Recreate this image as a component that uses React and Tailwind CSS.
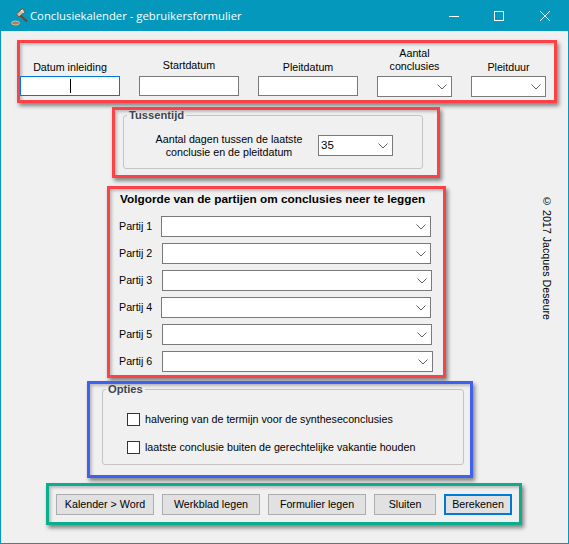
const sans = "font-['Liberation_Sans',Arial,sans-serif]";

function Chevron() {
  return (
    <svg width="10" height="6" viewBox="0 0 10 6" className="shrink-0" fill="none" stroke="#606060" strokeWidth="1">
      <path d="M0.5 0.5 L5 5 L9.5 0.5" />
    </svg>
  );
}

function Combo({ className = "", value = "" }) {
  return (
    <div className={`box-border h-[21px] flex items-center justify-between bg-white border border-[#7a7a7a] pl-[2px] pr-[2px] ${className}`}>
      <span className="text-[11.5px] leading-none text-black">{value}</span>
      <span className="w-[15px] flex justify-center"><Chevron /></span>
    </div>
  );
}

function TextInput({ focused = false, className = "" }) {
  return (
    <div className={`box-border h-[20px] w-[100px] bg-white border flex items-center justify-center ${focused ? "border-[#0078d7]" : "border-[#7a7a7a]"} ${className}`}>
      {focused && <span className="block w-px h-[14px] bg-black" />}
    </div>
  );
}

function Legend({ children }) {
  return (
    <legend className="ml-[3px] px-[2px] text-[11.2px] leading-[12px] font-bold text-[#3c4650]">{children}</legend>
  );
}

const partijen = [
  { n: 1, top: "mt-[10px]", ml: "ml-[0px]", w: "w-[270px]" },
  { n: 2, top: "mt-[6px]", ml: "ml-[1px]", w: "w-[269px]" },
  { n: 3, top: "mt-[6px]", ml: "ml-[1px]", w: "w-[270px]" },
  { n: 4, top: "mt-[6px]", ml: "ml-[0px]", w: "w-[270px]" },
  { n: 5, top: "mt-[6px]", ml: "ml-[1px]", w: "w-[270px]" },
  { n: 6, top: "mt-[6px]", ml: "ml-[1px]", w: "w-[271px]" },
];

const buttons = [
  { t: "Kalender > Word", w: "w-[98px]" },
  { t: "Werkblad legen", w: "w-[98px]" },
  { t: "Formulier legen", w: "w-[98px]" },
  { t: "Sluiten", w: "w-[62px]" },
];

const boxShadow = "shadow-[2px_3px_4px_rgba(0,0,0,0.45),inset_2px_2px_3px_rgba(0,0,0,0.22)]";

export default function App() {
  return (
    <div className={`w-[569px] h-[544px] box-border border-x border-b border-[#0398bc] bg-[#f0f0f0] text-[10.7px] text-black overflow-hidden flex flex-col ${sans}`}>
      {/* Title bar */}
      <div className="h-[31px] shrink-0 -mx-px bg-[#0398bc] flex items-center text-white">
        <svg width="20" height="20" viewBox="0 0 20 20" className="ml-[10px] shrink-0">
          <ellipse cx="5.5" cy="17" rx="4" ry="2" fill="#a9805f" stroke="#e6d8c8" strokeWidth="0.7" />
          <path d="M10.5 9.5 L16.5 15" stroke="#6b4a2d" strokeWidth="2" strokeLinecap="round" />
          <path d="M6.5 8 L12.5 2.5 L15 5.5 L9 11 Z" fill="#d9b8a0" stroke="#5d4030" strokeWidth="0.7" />
          <path d="M11 4 L13.5 6.8" stroke="#fff" strokeWidth="1" />
        </svg>
        <span className="ml-[0px] text-[11.3px] font-['Open_Sans',sans-serif] leading-none">Conclusiekalender - gebruikersformulier</span>
        <div className="ml-auto flex items-center">
          <svg width="10" height="10" viewBox="0 0 10 10" className="mr-[35px]" stroke="#fff" fill="none"><path d="M0 5.5 H10" /></svg>
          <svg width="10" height="10" viewBox="0 0 10 10" className="mr-[36px]" stroke="#fff" fill="none"><rect x="0.5" y="0.5" width="9" height="9" /></svg>
          <svg width="10" height="10" viewBox="0 0 10 10" className="mr-[19px]" stroke="#fff" fill="none"><path d="M0 0 L10 10 M10 0 L0 10" /></svg>
        </div>
      </div>

      {/* Dates */}
      <div className={`box-border mt-[9px] ml-[16px] w-[540px] h-[63px] border-[3px] border-[#fb4246] shrink-0 flex items-start gap-[19px] pl-0 ${boxShadow}`}>
        <div className="w-[100px] mt-[18px] flex flex-col items-center">
          <span className="leading-[13px] mb-[2px] whitespace-nowrap">Datum inleiding</span>
          <TextInput focused />
        </div>
        <div className="w-[100px] mt-[16px] flex flex-col items-center">
          <span className="leading-[13px] mb-[4px]">Startdatum</span>
          <TextInput />
        </div>
        <div className="w-[100px] mt-[18px] flex flex-col items-center">
          <span className="leading-[13px] mb-[2px]">Pleitdatum</span>
          <TextInput />
        </div>
        <div className="w-[75px] mt-[4px] flex flex-col items-center">
          <span className="leading-[13px] mb-[3px] text-center">Aantal<br />conclusies</span>
          <Combo className="w-[75px]" />
        </div>
        <div className="w-[75px] mt-[18px] flex flex-col items-center">
          <span className="leading-[13px] mb-[2px]">Pleitduur</span>
          <Combo className="w-[75px]" />
        </div>
      </div>

      {/* Tussentijd */}
      <div className={`box-border mt-[4px] ml-[111px] w-[328px] h-[71px] border-[3px] border-[#fb4246] shrink-0 pl-[8px] ${boxShadow}`}>
        <fieldset className="box-border w-[300px] h-[60px] -mt-[1px] border border-[#c4c4c4] rounded-[3px]">
          <Legend>Tussentijd</Legend>
          <div className="flex items-center mt-[11px]">
            <div className="w-[210px] mt-[1px] text-center leading-[13px]">Aantal dagen tussen de laatste<br />conclusie en de pleitdatum</div>
            <Combo className="w-[75px] -ml-[16px]" value="35" />
          </div>
        </fieldset>
      </div>

      {/* Volgorde + copyright */}
      <div className="flex mt-[8px] shrink-0">
        <div className={`box-border ml-[106px] w-[339px] h-[192px] border-[3px] border-[#fb4246] ${boxShadow}`}>
          <div className="ml-[10px] mt-[3px] h-[14px] text-[11.8px] leading-[14px] font-bold whitespace-nowrap">Volgorde van de partijen om conclusies neer te leggen</div>
          {partijen.map((p) => (
            <div key={p.n} className={`flex items-center ${p.top}`}>
              <span className="ml-[9px] w-[42px] leading-[13px] shrink-0 whitespace-nowrap">Partij {p.n}</span>
              <Combo className={`${p.w} ${p.ml}`} />
            </div>
          ))}
        </div>
        <div className="ml-[94px] mt-[9px] h-[130px] [writing-mode:vertical-rl] leading-[13px] whitespace-nowrap">© 2017 Jacques Deseure</div>
      </div>

      {/* Opties */}
      <div className={`box-border mt-[3px] ml-[86px] w-[386px] h-[97px] border-[3px] border-[#4060f0] shrink-0 pl-[12px] ${boxShadow}`}>
        <fieldset className="box-border w-[362px] h-[82px] mt-[-1px] border border-[#c4c4c4] rounded-[3px]">
          <Legend>Opties</Legend>
          <div className="flex items-center mt-[17px] ml-[24px] h-[14px]">
            <span className="box-border w-[13px] h-[13px] bg-white border border-[#333]" />
            <span className="ml-[5px] leading-[13px] whitespace-nowrap">halvering van de termijn voor de syntheseconclusies</span>
          </div>
          <div className="flex items-center mt-[14px] ml-[24px] h-[14px]">
            <span className="box-border w-[13px] h-[13px] bg-white border border-[#333]" />
            <span className="ml-[5px] leading-[13px] whitespace-nowrap">laatste conclusie buiten de gerechtelijke vakantie houden</span>
          </div>
        </fieldset>
      </div>

      {/* Buttons */}
      <div className={`box-border mt-[5px] ml-[45px] w-[476px] h-[42px] border-[3px] border-[#0bae8c] shrink-0 flex items-center gap-[8px] pl-[7px] ${boxShadow}`}>
        {buttons.map((b) => (
          <div key={b.t} className={`box-border h-[21px] ${b.w} bg-[#e1e1e1] border border-[#adadad] flex items-center justify-center leading-none whitespace-nowrap`}>{b.t}</div>
        ))}
        <div className="box-border h-[21px] w-[68px] bg-[#e1e1e1] border-2 border-[#0078d7] flex items-center justify-center leading-none whitespace-nowrap">Berekenen</div>
      </div>
    </div>
  );
}
